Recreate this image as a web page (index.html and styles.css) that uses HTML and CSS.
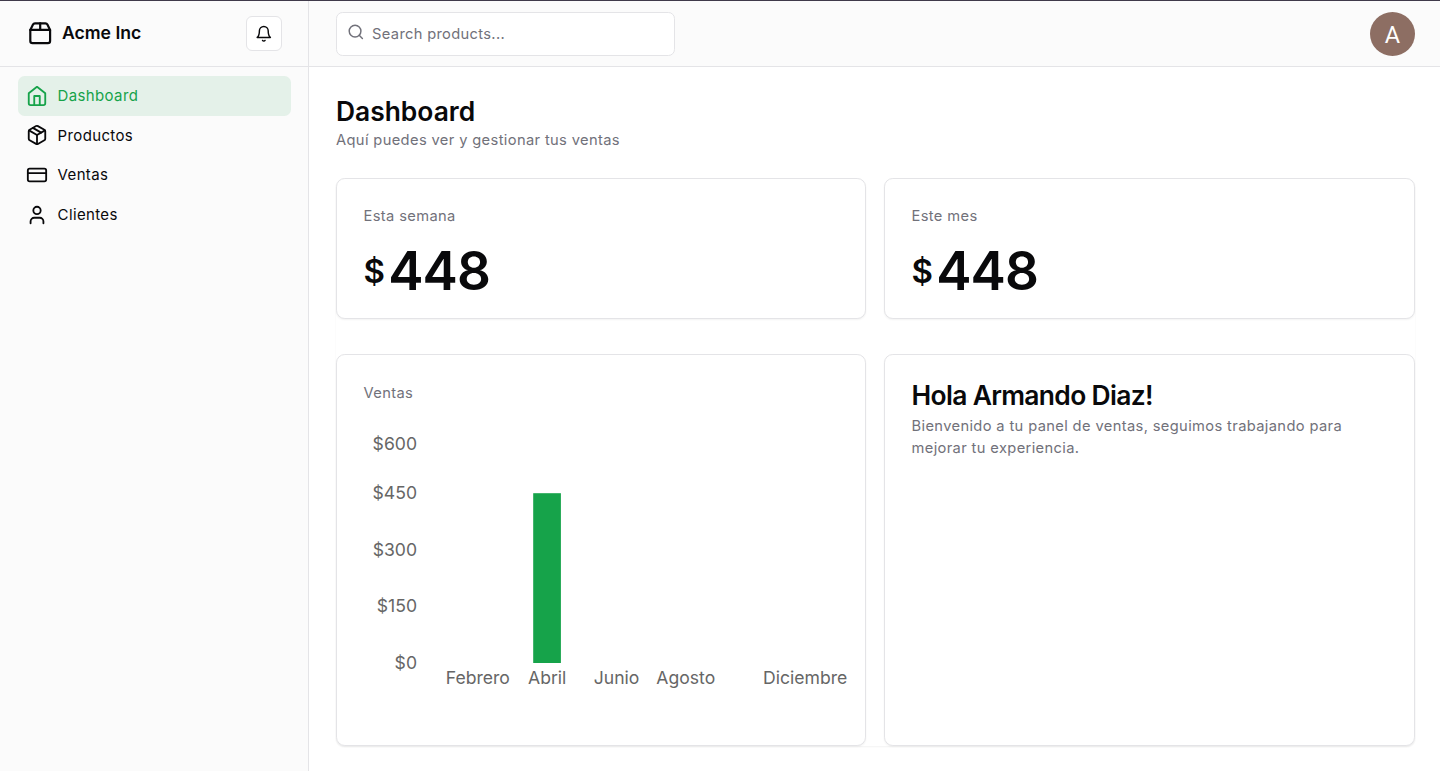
FILE: index.html
```html
<!DOCTYPE html>
<html lang="es">
<head>
<meta charset="utf-8">
<title>Dashboard</title>
<link rel="stylesheet" href="styles.css">
</head>
<body>
<div class="app">
  <aside class="sidebar">
    <div class="brand-bar">
      <a class="brand">
        <svg class="icon brand-icon" viewBox="0 0 24 24"><path d="M3 9h18v10a2 2 0 0 1-2 2H5a2 2 0 0 1-2-2V9Z"/><path d="m3 9 2.45-4.9A2 2 0 0 1 7.24 3h9.52a2 2 0 0 1 1.8 1.1L21 9"/><path d="M12 3v6"/></svg>
        <span>Acme Inc</span>
      </a>
      <button class="bell" aria-label="Notificaciones">
        <svg class="icon bell-icon" viewBox="0 0 24 24"><path d="M6 8a6 6 0 0 1 12 0c0 7 3 9 3 9H3s3-2 3-9"/><path d="M10.3 21a1.94 1.94 0 0 0 3.4 0"/></svg>
      </button>
    </div>
    <nav class="nav">
      <a class="nav-item active"><svg class="icon nav-icon" viewBox="0 0 24 24"><path d="m3 9 9-7 9 7v11a2 2 0 0 1-2 2H5a2 2 0 0 1-2-2z"/><path d="M9 22V12h6v10"/></svg><span>Dashboard</span></a>
      <a class="nav-item"><svg class="icon nav-icon" viewBox="0 0 24 24"><path d="m7.5 4.27 9 5.15"/><path d="M21 8a2 2 0 0 0-1-1.73l-7-4a2 2 0 0 0-2 0l-7 4A2 2 0 0 0 3 8v8a2 2 0 0 0 1 1.73l7 4a2 2 0 0 0 2 0l7-4A2 2 0 0 0 21 16Z"/><path d="m3.3 7 8.7 5 8.7-5"/><path d="M12 22V12"/></svg><span>Productos</span></a>
      <a class="nav-item"><svg class="icon nav-icon" viewBox="0 0 24 24"><rect x="2" y="5" width="20" height="14" rx="2"/><path d="M2 10h20"/></svg><span>Ventas</span></a>
      <a class="nav-item"><svg class="icon nav-icon" viewBox="0 0 24 24"><path d="M19 21v-2a4 4 0 0 0-4-4H9a4 4 0 0 0-4 4v2"/><circle cx="12" cy="7" r="4"/></svg><span>Clientes</span></a>
    </nav>
  </aside>
  <div class="content">
    <header class="topbar">
      <label class="search">
        <svg class="icon search-icon" viewBox="0 0 24 24"><circle cx="11" cy="11" r="8"/><path d="m21 21-4.3-4.3"/></svg>
        <input class="search-input" type="search" placeholder="Search products...">
      </label>
      <div class="avatar">A</div>
    </header>
    <main class="main">
      <h1 class="title">Dashboard</h1>
      <p class="muted">Aquí puedes ver y gestionar tus ventas</p>
      <div class="cards">
        <section class="card stat">
          <p class="muted">Esta semana</p>
          <p class="amount"><span class="currency">$</span><span class="value">448</span></p>
        </section>
        <section class="card stat">
          <p class="muted">Este mes</p>
          <p class="amount"><span class="currency">$</span><span class="value">448</span></p>
        </section>
        <section class="card chart-card">
          <p class="muted">Ventas</p>
          <svg class="chart" viewBox="0 0 502 300">
            <g class="axis-y">
              <text x="54" y="30">$600</text>
              <text x="54" y="79">$450</text>
              <text x="54" y="136">$300</text>
              <text x="54" y="192">$150</text>
              <text x="54" y="249">$0</text>
            </g>
            <rect class="bar" x="170.2" y="73.2" width="27.7" height="169.8"/>
            <g class="axis-x">
              <text x="114.8" y="264">Febrero</text>
              <text x="184.2" y="264">Abril</text>
              <text x="253.6" y="264">Junio</text>
              <text x="322.8" y="264">Agosto</text>
              <text x="442.2" y="264">Diciembre</text>
            </g>
          </svg>
        </section>
        <section class="card welcome">
          <h2 class="welcome-title">Hola Armando Diaz!</h2>
          <p class="muted">Bienvenido a tu panel de ventas, seguimos trabajando para mejorar tu experiencia.</p>
        </section>
      </div>
    </main>
  </div>
</div>
</body>
</html>
```
FILE: styles.css
```css
* { box-sizing: border-box; margin: 0; }
body {
  font-family: Inter, "Liberation Sans", sans-serif;
  color: #09090b;
  background: #fff;
}
.app {
  display: grid;
  grid-template-columns: 309px 1fr;
  height: 771px;
  border-top: 1px solid #3f3a4a;
  overflow: hidden;
}
.icon {
  fill: none;
  stroke: currentColor;
  stroke-width: 2;
  stroke-linecap: round;
  stroke-linejoin: round;
  flex: none;
}
.sidebar {
  background: #fbfbfb;
  border-right: 1px solid #e4e4e7;
}
.brand-bar {
  display: flex;
  align-items: center;
  justify-content: space-between;
  height: 66px;
  padding: 0 26px 0 26.8px;
  border-bottom: 1px solid #e4e4e7;
}
.brand {
  display: flex;
  align-items: center;
  gap: 8.8px;
  padding-bottom: 1px;
  font-size: 17.6px;
  font-weight: 600;
}
.brand-icon { width: 26.4px; height: 26.4px; }
.bell {
  display: flex;
  align-items: center;
  justify-content: center;
  width: 36px;
  height: 35px;
  padding: 0;
  color: #09090b;
  background: #fff;
  border: 1px solid #e4e4e7;
  border-radius: 6px;
}
.bell-icon { width: 17.6px; height: 17.6px; }
.nav { padding: 9px 17px 9px 18px; }
.nav-item {
  display: flex;
  align-items: center;
  gap: 9.2px;
  height: 39.6px;
  padding: 0 8.4px;
  border-radius: 6.6px;
  font-size: 15px;
  letter-spacing: 0.36px;
}
.nav-item.active { color: #16a34a; background: #e4f1e9; }
.nav-icon { width: 22px; height: 22px; }
.topbar {
  display: flex;
  align-items: center;
  justify-content: space-between;
  height: 66px;
  padding: 0 25px 0 27px;
  background: #fbfbfb;
  border-bottom: 1px solid #e4e4e7;
}
.search {
  display: flex;
  align-items: center;
  gap: 7.5px;
  width: 339px;
  height: 44px;
  padding: 0 10px;
  background: #fff;
  border: 1px solid #e4e4e7;
  border-radius: 6.6px;
}
.search-icon {
  width: 17.6px;
  height: 17.6px;
  margin-bottom: 4px;
  color: #71717a;
}
.search-input {
  flex: 1;
  padding: 0;
  border: 0;
  outline: 0;
  background: none;
  font: 14.7px Inter, sans-serif;
  letter-spacing: 0.32px;
}
.search-input::placeholder { color: #71717a; }
.avatar {
  width: 45px;
  height: 44px;
  border-radius: 50%;
  background: #8d6e63;
  color: #fff;
  font: 23.5px/46px Roboto, sans-serif;
  text-align: center;
}
.main { padding: 27px 25px 0 27px; }
.title {
  font-size: 26.4px;
  line-height: 35px;
  font-weight: 600;
}
.muted {
  font-size: 14.7px;
  line-height: 22px;
  letter-spacing: 0.36px;
  color: #71717a;
}
.cards {
  display: grid;
  grid-template-columns: 530px 531px;
  grid-template-rows: 141px 392px;
  gap: 35px 18px;
  margin-top: 27px;
  border-radius: 8.8px;
  box-shadow: 0 1px 2px rgba(0, 0, 0, 0.05);
}
.card {
  background: #fff;
  border: 1px solid #e4e4e7;
  border-radius: 8.8px;
  box-shadow: 0 1px 2px rgba(0, 0, 0, 0.05);
  padding: 26px 26.5px 0;
}
.amount {
  display: flex;
  align-items: center;
  gap: 3.2px;
  margin-top: 18px;
  font-size: 33px;
  line-height: 53px;
  font-weight: 600;
}
.value {
  font-size: 53px;
  font-weight: 560;
  letter-spacing: -0.9px;
}
.chart-card { padding: 27px 0 0 26.5px; }
.chart {
  display: block;
  width: 502px;
  height: 300px;
  margin: 16px 0 0 -0.5px;
  font-size: 17.6px;
  fill: #666;
}
.axis-y { text-anchor: end; }
.axis-x { text-anchor: middle; }
.bar { fill: #16a34a; }
.welcome-title {
  font-size: 26.4px;
  line-height: 29px;
  font-weight: 600;
  letter-spacing: -0.66px;
}
.welcome .muted { margin-top: 5px; }
```
